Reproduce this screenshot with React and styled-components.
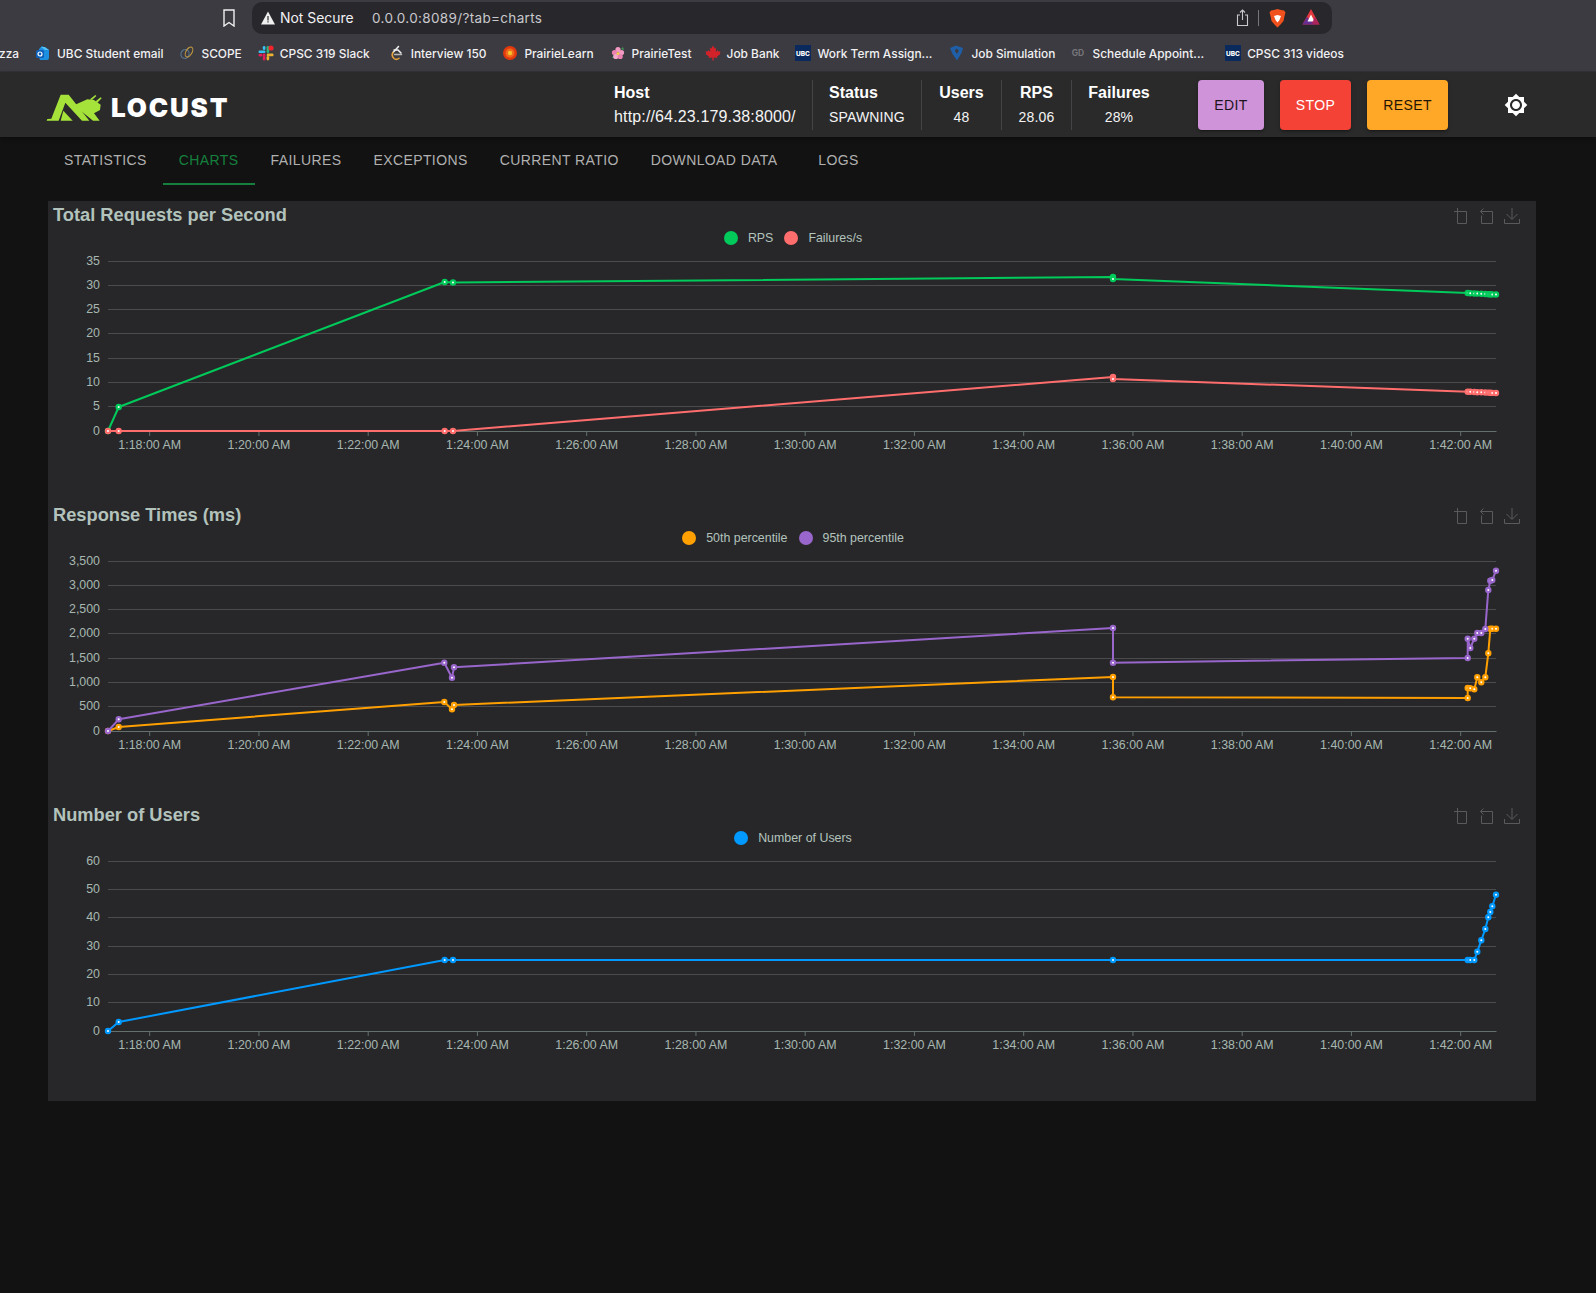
import React from 'react';
import styled, { createGlobalStyle } from 'styled-components';

const GlobalStyle = createGlobalStyle`
  html, body {
    margin: 0;
    padding: 0;
    background: #121212;
    min-height: 1293px;
    font-family: "Liberation Sans", Arial, sans-serif;
    overflow: hidden;
  }
`;

const BrowserBar = styled.div`
  height: 72px;
  background: #3c3b41;
  border-bottom: 1px solid #333237;
  box-sizing: border-box;
  color: #f1f1f3;
  font-family: Inter, "Liberation Sans", sans-serif;
`;

const UrlRow = styled.div`
  height: 35px;
  padding: 2px 0 0 222px;
  box-sizing: border-box;
  display: flex;
  align-items: flex-start;
`;

const SaveMark = styled.svg`
  width: 14px;
  height: 18px;
  margin: 7px 16px 0 0;
  flex: none;
`;

const AddressBox = styled.div`
  width: 1080px;
  height: 32px;
  background: #28272c;
  border-radius: 10px;
  display: flex;
  align-items: center;
  padding: 0 12px 0 9px;
  box-sizing: border-box;
  font-size: 13.9px;
  font-weight: 400;
`;

const Warning = styled.svg`
  width: 14px;
  height: 14px;
  margin-right: 5px;
`;

const NotSecure = styled.span`
  width: 92px;
  flex: none;
`;

const UrlText = styled.span`
  color: #c9c9cd;
  font-size: 13.5px;
  letter-spacing: 0.34px;
`;

const AddressTools = styled.div`
  margin-left: auto;
  display: flex;
  align-items: center;
`;

const ToolDivider = styled.span`
  width: 1px;
  height: 16px;
  background: #77767b;
  margin: 0 10px 0 9px;
`;

const BookmarkRow = styled.div`
  height: 36px;
  margin-left: -1px;
  display: flex;
  align-items: center;
  gap: 16px;
  overflow: hidden;
  white-space: nowrap;
`;

const BookmarkItem = styled.div`
  display: flex;
  align-items: center;
  gap: 6px;
  margin-left: ${(p) => p.$extra || 0}px;
  font-size: 11.9px;
  font-weight: 500;
  svg { width: 16px; height: 16px; flex: none; }
`;

const Header = styled.header`
  height: 65px;
  background: #2a2a2b;
  padding-left: 48px;
  display: flex;
  align-items: center;
  box-shadow: 0 2px 4px rgba(0, 0, 0, 0.3);
  color: #fff;
  position: relative;
`;

const Logo = styled.div`
  width: 550px;
  flex: none;
  display: flex;
  align-items: center;
  gap: 3px;
  margin-top: 6px;
  svg { margin-left: -4px; flex: none; }
`;

const LogoWord = styled.span`
  font-family: Inter, "Liberation Sans", sans-serif;
  font-weight: 900;
  font-size: 26px;
  letter-spacing: 1.8px;
  line-height: 30px;
  color: #fff;
  margin-top: 1px;
`;

const Stat = styled.div`
  width: ${(p) => p.$width}px;
  flex: none;
  box-sizing: border-box;
  height: 50px;
  padding: 0 ${(p) => (p.$center ? 0 : 16)}px;
  text-align: ${(p) => (p.$center ? 'center' : 'left')};
  border-right: ${(p) => (p.$last ? 'none' : '1px solid #444446')};
  display: flex;
  flex-direction: column;
  justify-content: center;
  gap: 2px;
  white-space: nowrap;
`;

const StatLabel = styled.div`
  font-size: 16px;
  font-weight: 700;
  line-height: 22px;
`;

const StatValue = styled.div`
  font-size: ${(p) => p.$size || 14}px;
  letter-spacing: 0.15px;
  line-height: 22px;
  color: #f4f4f4;
`;

const ActionButton = styled.button`
  width: ${(p) => p.$width}px;
  height: 50px;
  margin-right: 16px;
  border: 0;
  border-radius: 4px;
  background: ${(p) => p.$bg};
  color: ${(p) => p.$fg};
  font-family: "Liberation Sans", Arial, sans-serif;
  font-size: 14px;
  letter-spacing: 0.4px;
  box-shadow: 0 3px 1px -2px rgba(0,0,0,0.2), 0 2px 2px rgba(0,0,0,0.14), 0 1px 5px rgba(0,0,0,0.12);
  flex: none;
`;

const Actions = styled.div`
  margin-left: 32px;
  display: flex;
  align-items: center;
`;

const ThemeIcon = styled.svg`
  width: 24px;
  height: 24px;
  margin-left: 40px;
  fill: #fff;
`;

const Tabs = styled.nav`
  height: 48px;
  padding-left: 48px;
  display: flex;
`;

const Tab = styled.div`
  min-width: 90px;
  padding: 0 16px;
  box-sizing: border-box;
  display: flex;
  align-items: center;
  justify-content: center;
  font-size: 14px;
  letter-spacing: 0.4px;
  text-transform: uppercase;
  color: ${(p) => (p.$active ? '#15803d' : '#b0b0b0')};
  border-bottom: 2px solid ${(p) => (p.$active ? '#15803d' : 'transparent')};
  white-space: nowrap;
`;

const Panel = styled.main`
  margin: 16px 60px 0 48px;
  background: #27272a;
  height: 900px;
`;

const ChartBlock = styled.section`
  height: 300px;
`;

const TitleRow = styled.div`
  height: 28px;
  display: flex;
  align-items: center;
  padding: 0 16px 0 5px;
`;

const ChartTitle = styled.h2`
  margin: 0;
  font-size: 18.25px;
  font-weight: 700;
  color: #b3c3bc;
`;

const ToolIcons = styled.div`
  margin-left: auto;
  display: flex;
  gap: 9px;
  margin-top: 2px;
  svg { width: 16px; height: 16px; fill: none; stroke: #5a5a5d; stroke-width: 1; overflow: visible; }
`;

const Legend = styled.div`
  height: 18px;
  padding-left: 2px;
  display: flex;
  justify-content: center;
  align-items: center;
  gap: 11px;
`;

const LegendItem = styled.div`
  display: flex;
  align-items: center;
  gap: 10px;
  font-size: 12.4px;
  color: #b3c3bc;
`;

const LegendDot = styled.span`
  width: 14px;
  height: 14px;
  border-radius: 50%;
  background: ${(p) => p.$color};
`;

const PlotSvg = styled.svg`
  display: block;
  width: 1488px;
  height: 254px;
  font-size: 12.4px;
`;

const AxisText = styled.text`
  fill: #b3c3bc;
  opacity: 0.92;
`;

// bookmark favicons, small hand-drawn approximations
const favicons = {
  outlook: (
    <svg viewBox="0 0 16 16">
      <path d="M7 1l7 4v8a2 2 0 0 1-2 2H5l-1-3V4z" fill="#1d8fe0" />
      <path d="M6 2l4 3 4 0-4-3z" fill="#53c1f5" />
      <rect x="1" y="5" width="8" height="8" rx="1.5" fill="#0e5fb8" />
      <circle cx="5" cy="9" r="2" fill="none" stroke="#fff" strokeWidth="1.2" />
    </svg>
  ),
  scope: (
    <svg viewBox="0 0 16 16" fill="none">
      <ellipse cx="6" cy="9" rx="4" ry="4.5" stroke="#55738f" strokeWidth="1.2" transform="rotate(25 6 9)" />
      <ellipse cx="10" cy="7" rx="3" ry="5.5" stroke="#c39a3f" strokeWidth="1.1" transform="rotate(30 10 7)" />
    </svg>
  ),
  slack: (
    <svg viewBox="0 0 16 16">
      <rect x="0.5" y="5.5" width="7" height="2.6" rx="1.3" fill="#36c5f0" />
      <rect x="4.8" y="1" width="2.6" height="4" rx="1.3" fill="#36c5f0" />
      <rect x="8.6" y="1" width="2.6" height="7" rx="1.3" fill="#2eb67d" />
      <circle cx="13" cy="3" r="2.6" fill="#f2232b" />
      <rect x="8.6" y="8.6" width="7" height="2.6" rx="1.3" fill="#ecb22e" />
      <rect x="8.6" y="11" width="2.6" height="4.4" rx="1.3" fill="#ecb22e" />
      <rect x="4.8" y="8.6" width="2.6" height="7" rx="1.3" fill="#e01e5a" />
      <rect x="0.5" y="8.8" width="4" height="2.6" rx="1.3" fill="#e01e5a" />
    </svg>
  ),
  leetcode: (
    <svg viewBox="0 0 16 16" fill="none" strokeWidth="1.5" strokeLinecap="round">
      <path d="M9.5 1.5L4 7.5" stroke="#f2f2f2" />
      <path d="M4 7.5c-1.5 2 -1 4 1 6 1.5 1.2 3.5 1 5 -.3" stroke="#e8a33c" />
      <path d="M5.5 9.5h7" stroke="#b8b8b8" />
      <path d="M5 5l4 0 3 3" stroke="#f2f2f2" />
    </svg>
  ),
  prairieLearn: (
    <svg viewBox="0 0 16 16">
      <circle cx="8" cy="8" r="7" fill="#e2380f" />
      <circle cx="8" cy="8" r="4.5" fill="#f2691c" />
      <circle cx="8" cy="8" r="2.2" fill="#f7c02d" />
    </svg>
  ),
  prairieTest: (
    <svg viewBox="0 0 16 16">
      <path d="M2 13l2-3 1 3zM13 2l1 3-3-1z" fill="#3f9b54" />
      <circle cx="8" cy="4.500" r="2.600" fill="#f29ac2" />
      <circle cx="4.500" cy="7.500" r="2.600" fill="#ec82b0" />
      <circle cx="11.500" cy="7.500" r="2.600" fill="#f29ac2" />
      <circle cx="5.800" cy="11.500" r="2.600" fill="#f4a9cb" />
      <circle cx="10.200" cy="11.500" r="2.600" fill="#ec82b0" />
      <circle cx="8" cy="8.400" r="1.500" fill="#f7d154" />
    </svg>
  ),
  leaf: (
    <svg viewBox="0 0 16 16">
      <path d="M8 .5l1.800 3 1.400-.6-.5 4 2-1.800.6 1.400 2.200-.3-.7 2.200.7.5L12 11.500l.4 1.500-3.700-.5V15.500H7.300v-3l-3.700.5.4-1.500L.5 8.900l.7-.5-.7-2.200 2.200.3.6-1.400 2 1.800-.5-4 1.400.6z" fill="#d3222a" />
    </svg>
  ),
  ubc: (
    <svg viewBox="0 0 16 16">
      <rect width="16" height="16" fill="#0a2a5e" />
      <text x="8" y="10.500" textAnchor="middle" fontSize="6.500" fontWeight="800" fill="#fff">UBC</text>
    </svg>
  ),
  forage: (
    <svg viewBox="0 0 16 16">
      <path d="M1 3l6-2.500L14 3l-1.500 5L8 15.500 3.500 9z" fill="#1f5fa8" />
      <path d="M7 3.500l3 2-2 3.500-2-3z" fill="#3c3b41" />
    </svg>
  ),
  gd: (
    <svg viewBox="0 0 16 16">
      <text x="8" y="11" textAnchor="middle" fontSize="8.500" fontWeight="700" fill="#77767b">GD</text>
    </svg>
  ),
};

const bookmarks = [
  { text: 'zza' },
  { icon: 'outlook', text: 'UBC Student email' },
  { icon: 'scope', text: 'SCOPE' },
  { icon: 'slack', text: 'CPSC 319 Slack' },
  { icon: 'leetcode', text: 'Interview 150', extra: 3 },
  { icon: 'prairieLearn', text: 'PrairieLearn' },
  { icon: 'prairieTest', text: 'PrairieTest' },
  { icon: 'leaf', text: 'Job Bank', extra: -3 },
  { icon: 'ubc', text: 'Work Term Assign...' },
  { icon: 'forage', text: 'Job Simulation', extra: 1 },
  { icon: 'gd', text: 'Schedule Appoint...', extra: -1 },
  { icon: 'ubc', text: 'CPSC 313 videos', extra: 5 },
];

const tabs = ['Statistics', 'Charts', 'Failures', 'Exceptions', 'Current ratio', 'Download data', 'Logs'];

// last ten samples all share these x positions
const lastX = [1467.7, 1470.3, 1474.3, 1477.3, 1481.3, 1485.3, 1488.3, 1490.3, 1492.3, 1496];
const zip = (ys) => ys.map((y, i) => [lastX[i], y]);

const charts = [
  {
    title: 'Total Requests per Second',
    base: 261,
    yLabels: ['0', '5', '10', '15', '20', '25', '30', '35'],
    series: [
      {
        name: 'RPS',
        color: '#00ca5a',
        points: [
          [108, 431], [118.7, 407], [444.7, 282], [453, 282.500], [1113, 277], [1113, 279],
          ...zip([293, 293.200, 293.500, 293.600, 293.800, 294, 294.200, 294.300, 294.400, 294.500]),
        ],
      },
      {
        name: 'Failures/s',
        color: '#ff6d6d',
        points: [
          [108, 431], [118.7, 431], [444.7, 431], [453, 431], [1113, 377], [1113, 379],
          ...zip([391.700, 391.800, 392, 392.200, 392.300, 392.500, 392.600, 392.800, 392.900, 393]),
        ],
      },
    ],
  },
  {
    title: 'Response Times (ms)',
    base: 561,
    yLabels: ['0', '500', '1,000', '1,500', '2,000', '2,500', '3,000', '3,500'],
    series: [
      {
        name: '50th percentile',
        color: '#ffa000',
        points: [
          [108, 731], [118.7, 727], [444.3, 702], [452, 709.300], [454, 705], [1113, 677], [1113, 697.300],
          [1467.7, 698], [1467.7, 688],
          [1470.3, 688.300], [1474.3, 689.300], [1477.3, 677.300], [1481.3, 682.300], [1485.3, 677.300],
          [1488.3, 653.300], [1490.3, 628.700], [1492.3, 628.700], [1496, 628.700],
        ],
      },
      {
        name: '95th percentile',
        color: '#9966cc',
        points: [
          [108, 731], [118.7, 719.300], [444.3, 662.700], [452, 677.700], [454, 667.300], [1113, 628], [1113, 662.700],
          [1467.7, 658], [1467.7, 638.700],
          [1470.3, 648], [1474.3, 638.700], [1477.3, 633], [1481.3, 633], [1485.3, 629],
          [1488.3, 590], [1490.3, 580.700], [1492.3, 580], [1496, 570.700],
        ],
      },
    ],
  },
  {
    title: 'Number of Users',
    base: 861,
    yLabels: ['0', '10', '20', '30', '40', '50', '60'],
    series: [
      {
        name: 'Number of Users',
        color: '#0099ff',
        points: [
          [108, 1031], [118.7, 1022], [444.7, 960], [453, 960], [1113, 960],
          ...zip([960, 960, 960, 951.700, 940.300, 929, 917.300, 912, 906.300, 894.700]),
        ],
      },
    ],
  },
];

const timeLabels = Array.from({ length: 13 }, (_, i) => {
  const min = 18 + i * 2;
  return { x: 149.7 + i * 109.25, label: `1:${min}:00 AM` };
});

const Plot = ({ base, yLabels, series }) => {
  const height = 170;
  const steps = yLabels.length - 1;
  const bottom = base + height;
  return (
    <PlotSvg viewBox={`48 ${base - 14} 1488 254`}>
      {yLabels.map((label, i) => {
        const y = Math.floor(bottom - (i * height) / steps) + 0.5;
        return (
          <g key={label}>
            {i > 0 && <line x1="108" x2="1496" y1={y} y2={y} stroke="#4b4b4d" />}
            <AxisText x="100" y={y + 3.5} textAnchor="end">{label}</AxisText>
          </g>
        );
      })}
      <line x1="108" x2="1496.500" y1={bottom + 0.5} y2={bottom + 0.5} stroke="#63706b" />
      {timeLabels.map((t) => (
        <g key={t.label}>
          <line x1={t.x} x2={t.x} y1={bottom + 1} y2={bottom + 5} stroke="#63706b" />
          <AxisText x={t.x} y={bottom + 18} textAnchor="middle">{t.label}</AxisText>
        </g>
      ))}
      {series.map((s) => (
        <g key={s.name}>
          <polyline points={s.points.map((p) => p.join(',')).join(' ')} fill="none" stroke={s.color} strokeWidth="2" strokeLinejoin="round" />
          {s.points.map(([x, y], i) => (
            <circle key={i} cx={x} cy={y} r="2.100" fill="#fff" stroke={s.color} strokeWidth="2.200" />
          ))}
        </g>
      ))}
    </PlotSvg>
  );
};

const ChartTools = () => (
  <ToolIcons>
    <svg viewBox="0 0 16 16">
      <path d="M0 3.500h12.500V15.500H3.500V0" />
    </svg>
    <svg viewBox="0 0 16 16">
      <path d="M4.500 .5l-3 3 3 3M1.500 3.500h12v12H2.500V7.500" />
    </svg>
    <svg viewBox="0 0 16 16">
      <path d="M8 0v11M2.500 6L8 11.500 13.500 6M.5 11v4.500h15V11" />
    </svg>
  </ToolIcons>
);

export default function App() {
  return (
    <>
      <GlobalStyle />
      <BrowserBar>
        <UrlRow>
          <SaveMark viewBox="0 0 14 18" fill="none" stroke="#f0f0f0" strokeWidth="1.400">
            <path d="M2 1h10v16l-5-3.500L2 17z" />
          </SaveMark>
          <AddressBox>
            <Warning viewBox="0 0 14 14">
              <path d="M7 .5L14 13.500H0z" fill="#f0f0f0" />
              <path d="M6.400 5h1.200v4.500H6.400zM6.400 10.300h1.200v1.300H6.400z" fill="#28272c" />
            </Warning>
            <NotSecure>Not Secure</NotSecure>
            <UrlText>0.0.0.0:8089/?tab=charts</UrlText>
            <AddressTools>
              <svg width="13" height="18" viewBox="0 0 13 18" fill="none" stroke="#c9c9cd" strokeWidth="1.100">
                <path d="M4 6H1.500v10.500h10V6H9M6.500 11V1M4 3.500L6.500 1 9 3.500" />
              </svg>
              <ToolDivider />
              <svg width="17" height="19" viewBox="0 0 17 19">
                <path d="M8.500 0L12 1l3 .5 1.500 2-1 3.500-1 5-3 3.500-3 3-3-3-3-3.500-1-5-1-3.500 1.500-2L5 1z" fill="#f1521d" />
                <path d="M5 7l3.500-1L12 7l-1.500 4-2 2.500-2-2.500z" fill="#fff" />
              </svg>
              <svg width="18" height="18" viewBox="0 0 18 18" style={{ marginLeft: 16 }}>
                <path d="M9 0L17.500 15.500H.5z" fill="#e2383e" />
                <path d="M.5 15.500L5 8 13 15.500z" fill="#662d91" />
                <path d="M9 5.500l3.500 7h-7z" fill="#fff" />
                <path d="M17.500 15.500L13 8l-4 7.500z" fill="#9e1f63" opacity="0.8" />
              </svg>
            </AddressTools>
          </AddressBox>
        </UrlRow>
        <BookmarkRow>
          {bookmarks.map((b, i) => (
            <BookmarkItem key={i} $extra={b.extra}>
              {b.icon && favicons[b.icon]}
              <span>{b.text}</span>
            </BookmarkItem>
          ))}
        </BookmarkRow>
      </BrowserBar>

      <Header>
        <Logo>
          <svg width="64" height="36" viewBox="0 0 192 108" aria-label="Locust logo">
            <g fill="#a6e33a">
              <path d="M22 86L50 14h24l62 78h-22L64 38 44 92H8l2-5z" />
              <path d="M58 62l28 30H50z" />
              <path d="M90 46l40-18 20 2 20 14-2 16-18 10 17 22-20 0-57-46z" />
              <path d="M138 28l16-13 3 3-13 12zM155 34l15-12 3 3-13 13z" />
            </g>
          </svg>
          <LogoWord>LOCUST</LogoWord>
        </Logo>
        <Stat $width={215}>
          <StatLabel>Host</StatLabel>
          <StatValue $size={16}>http://64.23.179.38:8000/</StatValue>
        </Stat>
        <Stat $width={109}>
          <StatLabel>Status</StatLabel>
          <StatValue>SPAWNING</StatValue>
        </Stat>
        <Stat $width={80} $center>
          <StatLabel>Users</StatLabel>
          <StatValue>48</StatValue>
        </Stat>
        <Stat $width={70} $center>
          <StatLabel>RPS</StatLabel>
          <StatValue>28.06</StatValue>
        </Stat>
        <Stat $width={94} $center $last>
          <StatLabel>Failures</StatLabel>
          <StatValue>28%</StatValue>
        </Stat>
        <Actions>
          <ActionButton $width={66} $bg="#ce93d8" $fg="#1d1420">EDIT</ActionButton>
          <ActionButton $width={71} $bg="#f44336" $fg="#fff">STOP</ActionButton>
          <ActionButton $width={81} $bg="#ffa726" $fg="#1f1605">RESET</ActionButton>
        </Actions>
        <ThemeIcon viewBox="0 0 24 24">
          <path d="M20 8.690V4h-4.690L12 .69 8.690 4H4v4.690L.69 12 4 15.310V20h4.690L12 23.310 15.310 20H20v-4.690L23.310 12 20 8.690zM12 18c-3.310 0-6-2.690-6-6s2.690-6 6-6 6 2.690 6 6-2.690 6-6 6zm0-10c-2.210 0-4 1.790-4 4s1.790 4 4 4 4-1.790 4-4-1.790-4-4-4z" />
        </ThemeIcon>
      </Header>

      <Tabs>
        {tabs.map((t) => (
          <Tab key={t} $active={t === 'Charts'}>{t}</Tab>
        ))}
      </Tabs>

      <Panel>
        {charts.map((c) => (
          <ChartBlock key={c.title}>
            <TitleRow>
              <ChartTitle>{c.title}</ChartTitle>
              <ChartTools />
            </TitleRow>
            <Legend>
              {c.series.map((s) => (
                <LegendItem key={s.name}>
                  <LegendDot $color={s.color} />
                  {s.name}
                </LegendItem>
              ))}
            </Legend>
            <Plot base={c.base} yLabels={c.yLabels} series={c.series} />
          </ChartBlock>
        ))}
      </Panel>
    </>
  );
}
